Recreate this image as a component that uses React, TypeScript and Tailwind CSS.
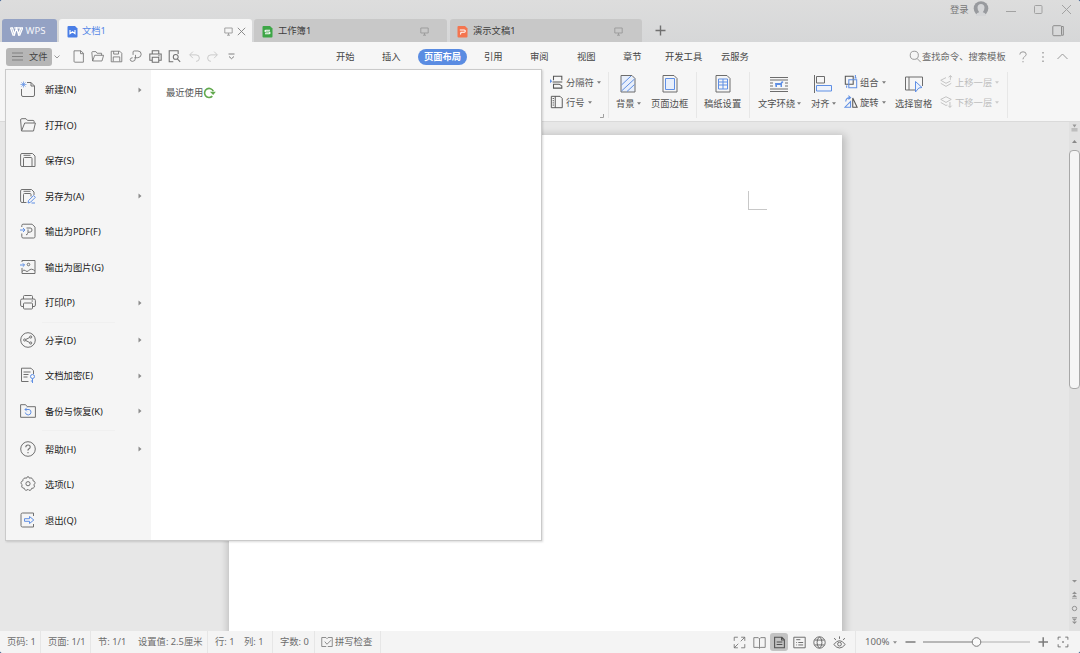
import type { ReactNode } from 'react';
import clsx from 'clsx';

function Svg({ size = 16, className, children }: { size?: number; className?: string; children: ReactNode }) {
  return (
    <svg
      width={size}
      height={size}
      viewBox="0 0 16 16"
      fill="none"
      stroke="currentColor"
      strokeWidth="1"
      className={clsx('shrink-0', className)}
    >
      {children}
    </svg>
  );
}

const BLUE = '#5f8fe4';

/* ---------- file menu icons ---------- */

const menuIcons: Record<string, ReactNode> = {
  new: (
    <>
      <path d="M1.500 8v6q0 1.500 1.500 1.500h10q1.500 0 1.500-1.500V5l-3.500-3.500H7M11 1.500v3.500h3.500" />
      <path d="M3.500.5v6M.5 3.500h6M1.400 1.400l4.200 4.200M5.600 1.400L1.400 5.600" stroke={BLUE} strokeWidth=".7" />
    </>
  ),
  open: <path d="M1.500 14L.6 3q0-1.300 1.200-1.300h4.200l1.500 1.700h5.600q1 0 1 1v1.400M1.500 14h12l1.900-8H4.700L1.500 14z" />,
  save: (
    <>
      <path d="M2 1.500h10.500l2.500 2.500v10.500H2q-1.400 0-1.400-1.400V2.900Q.6 1.500 2 1.500z" />
      <path d="M3.500 14.500v-8q0-1 1-1h6.500q1 0 1 1v8M3.500 3.300h7" />
    </>
  ),
  saveAs: (
    <>
      <path d="M6.500 14.500H2q-1.400 0-1.400-1.400V2.900Q.6 1.500 2 1.500h9.500l2.500 2.500v3M3.500 14.500v-8q0-1 1-1h5.500q1 0 1 1v2M3.500 3.300h7" />
      <path d="M8 15l.6-2.500 5-5 1.800 1.800-5 5L8 15zM11.500 15h3.500" stroke={BLUE} />
    </>
  ),
  pdf: (
    <>
      <path d="M1.800 4V2.500q0-1.300 1.300-1.300h9l2.900 2.900v9.600q0 1.300-1.300 1.300H3.100q-1.300 0-1.300-1.300V10.500" />
      <path d="M6.500 5h3.700q1.800 0 1.800 2t-1.800 2q-2.700 0-2.700 1.500T6 11.700M8 6.500v3" />
      <path d="M0 7h5M3 5l2 2-2 2" stroke={BLUE} />
    </>
  ),
  image: (
    <>
      <path d="M2 3V1.500h13v13H2V9M2 12.500q2-2.500 3.500-.8t3 0q3-3.200 6.500.4" />
      <circle cx="8.500" cy="5.500" r="1.300" />
      <path d="M0 6h4.500M2.800 4.300L4.500 6 2.800 7.700" stroke={BLUE} />
    </>
  ),
  print: (
    <>
      <path d="M3.500 5V2.500q0-1 1-1h7q1 0 1 1V5M3.500 12.500H2q-1.400 0-1.400-1.400V6.500Q.6 5 2 5h12q1.400 0 1.400 1.500v4.600q0 1.400-1.400 1.400h-1.500" />
      <path d="M4.500 9h7q1 0 1 1v4q0 1-1 1h-7q-1 0-1-1v-4q0-1 1-1zM11.500 7h1.500" />
    </>
  ),
  share: (
    <>
      <circle cx="8" cy="8" r="7.300" />
      <circle cx="4.700" cy="8" r="1.100" />
      <circle cx="10.700" cy="5" r="1.100" />
      <circle cx="10.700" cy="11" r="1.100" />
      <path d="M5.700 7.500l4-2M5.700 8.500l4 2" />
    </>
  ),
  encrypt: (
    <>
      <path d="M8.500 14.500H1.500V1.200H11L13.500 3.700V7M3.500 5h7M3.500 7.500h5M3.500 10h4" />
      <circle cx="12.500" cy="9.500" r="2" stroke={BLUE} />
      <path d="M12.500 11.500V16M12.500 14h-1.700" stroke={BLUE} />
    </>
  ),
  backup: (
    <>
      <path d="M.6 14.300V1.700h5l1.600 2h8.200v10.600z" />
      <path d="M5 6.500h4q2 .3 2 2.700t-2.700 2.800q-2.600-.1-3-2.500M6.800 4.700L5 6.500l1.800 1.800" stroke={BLUE} />
    </>
  ),
  help: (
    <>
      <circle cx="8" cy="8" r="7.300" />
      <path d="M5.800 6.300q0-2.300 2.200-2.300t2.200 2q0 1-1.200 1.800T8 9.700M8 11v1.300" strokeWidth="1.100" />
    </>
  ),
  options: (
    <>
      <path
        d="M6.400 2.300Q6.800.7 8 .7t1.600 1.600q1.400-1 2.500.1t.9 2.400q1.900.3 2 1.700t-1.200 2.400q1.200 1.200.4 2.400t-2.500 1q-.2 1.700-1.600 2T8 13.300q-1 1.300-2.300.9t-1.500-2q-1.700.2-2.300-1.100t.4-2.300Q.8 8 1 6.600t1.900-1.800q-.2-1.500 1-2.400t2.500-.1z"
        strokeLinejoin="round"
      />
      <circle cx="8" cy="7.700" r="2.100" />
    </>
  ),
  exit: (
    <>
      <path d="M13.500 4V1H2.500Q1 1 1 2.500v11Q1 15 2.500 15h11V12" />
      <path d="M4.500 6.700h5V4.500L13.800 8l-4.300 3.500V9.300h-5z" stroke={BLUE} />
    </>
  ),
};

type MenuEntry = { icon: string; label: string; sub?: boolean };

const fileMenu: MenuEntry[][] = [
  [
    { icon: 'new', label: '新建(N)', sub: true },
    { icon: 'open', label: '打开(O)' },
    { icon: 'save', label: '保存(S)' },
    { icon: 'saveAs', label: '另存为(A)', sub: true },
    { icon: 'pdf', label: '输出为PDF(F)' },
    { icon: 'image', label: '输出为图片(G)' },
    { icon: 'print', label: '打印(P)', sub: true },
  ],
  [
    { icon: 'share', label: '分享(D)', sub: true },
    { icon: 'encrypt', label: '文档加密(E)', sub: true },
    { icon: 'backup', label: '备份与恢复(K)', sub: true },
  ],
  [
    { icon: 'help', label: '帮助(H)', sub: true },
    { icon: 'options', label: '选项(L)' },
    { icon: 'exit', label: '退出(Q)' },
  ],
];

function FileMenu() {
  return (
    <div className="absolute top-[69px] left-[5px] z-10 flex h-[472px] w-[537px] border border-[#cacaca] bg-white shadow-[1px_1px_2px_rgba(0,0,0,0.15)]">
      <div className="w-[145px] bg-[#f5f5f5] pt-[2px]">
        {fileMenu.map((group, i) => (
          <div key={i} className={clsx(i > 0 && 'pt-[2.200px]')}>
            {i > 0 && <div className="mx-9 -mt-px h-px bg-[#f0f0f0]" />}
            {group.map((entry) => (
              <div key={entry.icon} className="flex h-[35.500px] items-center pl-[14px] text-[#1c1c1c]">
                <Svg className="-mt-px -ml-[.5px] text-[#707070]">{menuIcons[entry.icon]}</Svg>
                <span className="ml-[9.500px] w-[93px] pt-px">{entry.label}</span>
                {entry.sub && (
                  <svg width="4" height="6" viewBox="0 0 4 6" fill="#8c8c8c">
                    <path d="M.5.5L3.500 3 .5 5.500z" />
                  </svg>
                )}
              </div>
            ))}
          </div>
        ))}
      </div>
      <div className="flex flex-1 items-start pt-[16px] pl-[15px] text-[#555]">
        <span className="leading-[14px]">最近使用</span>
        <Svg size={13} className="text-[#62a94e]">
          <path d="M11.500 12.500A5.600 5.600 0 1 1 12.700 6.500" strokeWidth="2" />
          <path d="M8.500 7h7.300l-3.300 4z" fill="currentColor" stroke="none" />
        </Svg>
      </div>
    </div>
  );
}

/* ---------- title bar ---------- */

function Monitor() {
  return (
    <svg width="9" height="9" viewBox="0 0 9 9" fill="none" stroke="#999" strokeWidth=".9" className="mt-px ml-[.5px]">
      <path d="M.8 1h7.400v5H.8zM4.500 6v2M3 8.200h3" />
    </svg>
  );
}

function DocBadge({ kind }: { kind: 'writer' | 'sheet' | 'slides' }) {
  const fill = { writer: '#4a7ee6', sheet: '#3da646', slides: '#f4754f' }[kind];
  return (
    <svg width="11" height="12" viewBox="0 0 11 12" fill="none" stroke="#fff" strokeWidth="1.100" className="mt-px shrink-0">
      <path d="M1.500 0H8l2.500 2.500v8q0 1-1 1h-8q-1 0-1-1V1q0-1 1-1z" fill={fill} stroke="none" />
      {kind === 'writer' && <path d="M3 4v3.700l2.500-2 2.500 2V4" />}
      {kind === 'sheet' && <path d="M8 4.200H4q-1 0-1 .9t1 .9h3q1 0 1 .9t-1 .9H3M4.500 6h2" />}
      {kind === 'slides' && <path d="M2.800 4h4.500q1 0 1 1t-1 1.200H4L3.500 8.500" />}
    </svg>
  );
}

function TitleBar() {
  return (
    <header className="h-[42px] bg-linear-to-b from-[#dddddd] to-[#d6d7d8]">
      <div className="flex h-[19px] items-center justify-end pr-[8px] text-[#777]">
        <span className="w-[23px]">登录</span>
        <svg width="16" height="15" viewBox="0 0 16 15" className="mr-[17px] -mt-[3px]">
          <circle cx="8" cy="7.500" r="7.300" fill="#989a9e" />
          <path d="M3 15q0-3 3.200-3.800Q4.500 9.500 4.500 6.500 4.700 3 8 3t3.500 3.500q0 3-1.700 4.700Q13 12 13 15z" fill="#d4d5d7" />
        </svg>
        <svg width="66" height="12" viewBox="0 0 66 12" fill="none" stroke="#a2a2a2" strokeWidth="1" className="-mt-px">
          <path d="M0 8.500h10M56 2l9 9M65 2l-9 9" />
          <rect x="28.500" y="2.500" width="7.500" height="8" rx="1" />
        </svg>
      </div>
      <div className="flex h-[23px] pl-[2px] text-[#3d3d3d]">
        <div className="mr-[2px] flex w-[55px] items-center rounded-t-[3px] bg-[#94a2c4] pt-px pl-[8px] text-[#f4f6fa]">
          <svg width="13" height="9" viewBox="0 0 13 9" fill="none" stroke="#fff" strokeWidth="1.300">
            <path d="M.3.8h2.200l2 6.700 2-6.700 2 6.700 2.300-6.700H4.200M.5.8l2.500 7.400h1.500M10.800.8h2L9.800 8.200H8.500" />
          </svg>
          <span className="ml-[2.500px] text-[9.600px]">WPS</span>
        </div>
        <div className="mr-[2px] flex w-[193px] items-center rounded-t-[3px] bg-[#f6f6f6] pt-px pl-[8px] text-[#5587e6]">
          <DocBadge kind="writer" />
          <span className="ml-[4px] w-[141px]">文档1</span>
          <Monitor />
          <svg width="9" height="9" viewBox="0 0 9 9" stroke="#808080" strokeWidth=".9" className="mt-px ml-[4.500px]">
            <path d="M.8.8l7.400 7.400M8.200.8L.8 8.200" />
          </svg>
        </div>
        <div className="mr-[3px] flex w-[193px] items-center rounded-t-[3px] bg-[#c8c8c8] pt-px pl-[8px]">
          <DocBadge kind="sheet" />
          <span className="ml-[5px] w-[141px]">工作簿1</span>
          <Monitor />
        </div>
        <div className="flex w-[192px] items-center rounded-t-[3px] bg-[#c8c8c8] pt-px pl-[7px]">
          <DocBadge kind="slides" />
          <span className="ml-[5px] w-[140px]">演示文稿1</span>
          <Monitor />
        </div>
        <svg width="11" height="11" viewBox="0 0 11 11" stroke="#707070" strokeWidth="1.400" className="mt-[6px] ml-[13px]">
          <path d="M5.500.5v10M.5 5.500h10" />
        </svg>
        <svg width="13" height="12" viewBox="0 0 13 12" fill="none" stroke="#8c8c8c" className="mt-[6px] mr-[15px] ml-auto">
          <rect x=".8" y=".7" width="8.700" height="10" rx="1" />
          <path d="M9.500 1.500h1.800v8.700H9.500" />
        </svg>
      </div>
    </header>
  );
}

/* ---------- menu row ---------- */

const quickIcons: { id: string; w: string; body: ReactNode; dim?: boolean }[] = [
  { id: 'new', w: 'w-[19px]', body: <path d="M2.500 1h8.500l3 3v11h-10.500q-1 0-1-1zM10.500 1v3.500H14" /> },
  { id: 'open', w: 'w-[19px]', body: <path d="M2 13.500L1 3q0-1 1-1h4l1.500 2H13v2.500M2 13.500h11.500l2-7H4.500z" /> },
  { id: 'save', w: 'w-[19px]', body: <path d="M1.500 1.500h10.500l2.500 2.500v10.500h-13zM4.500 1.500V5h6V1.500M4 14V8.500h8V14" /> },
  { id: 'pdf', w: 'w-[20px]', body: <path d="M5 6V2.500Q5 1.200 6.500 1.200h4.500q4 .3 4 4t-4 4.300H6.500M8 6v3.500q0 4.500-3.500 4.500-3 0-3-2.200T4.500 9.500" /> },
  { id: 'print', w: 'w-[19px]', body: <path d="M4 5V1h8v4M4 12.500H1V5h14v7.500h-3M4 9h8v6H4zM11.500 7h1.500" strokeWidth="1.300" /> },
  { id: 'preview', w: 'w-[20px]', body: <path d="M6.500 14.500H1.500V1h11v4M12.500 8.500a3 3 0 1 1-6 0a3 3 0 1 1 6 0M11.500 11l3.500 3.500" strokeWidth="1.300" /> },
  { id: 'undo', w: 'w-[18px]', dim: true, body: <path d="M6 2L2 6l4 4M2.500 6H10q4 0 4 4t-4 4" /> },
  { id: 'redo', w: 'w-[20px]', dim: true, body: <path d="M10 2l4 4-4 4M13.500 6H6q-4 0-4 4t4 4" /> },
];

const ribbonTabs = [
  { label: '插入', w: 'w-[36px]' },
  { label: '页面布局', w: 'w-[49px]' },
  { label: '引用', w: 'w-[46px]' },
  { label: '审阅', w: 'w-[47px]' },
  { label: '视图', w: 'w-[46px]' },
  { label: '章节', w: 'w-[42px]' },
  { label: '开发工具', w: 'w-[56px]' },
  { label: '云服务', w: 'w-[30px]' },
];

function MenuRow() {
  return (
    <div className="flex h-[28px] items-center pt-px pl-[6px] text-[#444]">
      <div className="flex h-[18px] w-[46px] items-center rounded-[3px] bg-[#b6b6b6] pl-[6px]">
        <svg width="11" height="9" viewBox="0 0 11 9" stroke="#808080">
          <path d="M0 1h11M0 4.500h11M0 8h11" />
        </svg>
        <span className="ml-[6px]">文件</span>
      </div>
      <svg width="6" height="4" viewBox="0 0 6 4" fill="none" stroke="#999" className="mr-[11.500px] ml-[2px]">
        <path d="M.5.5L3 3 5.500.5" />
      </svg>
      {quickIcons.map((q) => (
        <div key={q.id} className={clsx('flex', q.w, q.dim ? 'text-[#c0c0c0]' : 'text-[#707070]')}>
          <Svg size={13}>{q.body}</Svg>
        </div>
      ))}
      <svg width="7" height="7" viewBox="0 0 7 7" fill="none" stroke="#808080" className="ml-[2.500px]">
        <path d="M.5 1h6M1 3.500l2.500 2.200L6 3.500" />
      </svg>
      <span className="ml-[101px] w-[46px]">开始</span>
      {ribbonTabs.map((t) =>
        t.label === '页面布局' ? (
          <span key={t.label} className="mr-[17px] flex h-[16px] w-[49px] items-center justify-center rounded-full bg-[#5a8ce2] font-bold text-white">
            {t.label}
          </span>
        ) : (
          <span key={t.label} className={clsx('whitespace-nowrap', t.w)}>
            {t.label}
          </span>
        ),
      )}
      <div className="ml-auto flex items-center pr-[12px] text-[#666]">
        <Svg size={13} className="text-[#858585]">
          <circle cx="6.500" cy="6.500" r="5" />
          <path d="M10 10.500l4.500 4.500" />
        </Svg>
        <span className="w-[97px] whitespace-nowrap">查找命令、搜索模板</span>
        <svg width="8" height="12" viewBox="0 0 8 12" fill="none" stroke="#999" className="mr-[15px]">
          <path d="M.8 3.500Q.8.800 4 .8t3.200 2.500q0 1.300-1.600 2.300T4 8.300M4 10v1.300" />
        </svg>
        <svg width="2" height="10" viewBox="0 0 2 10" fill="#999" className="mr-[13px]">
          <path d="M.3 0h1.400v1.400H.3zM.3 4.300h1.400v1.400H.3zM.3 8.600h1.400V10H.3z" />
        </svg>
        <svg width="11" height="7" viewBox="0 0 11 7" fill="none" stroke="#999">
          <path d="M.5 6l5-5 5 5" />
        </svg>
      </div>
    </div>
  );
}

/* ---------- ribbon ---------- */

function Caret({ className }: { className?: string }) {
  return (
    <svg width="4" height="3" viewBox="0 0 4 3" fill="currentColor" className={clsx('shrink-0 opacity-75', className)}>
      <path d="M0 .3h4L2 2.700z" />
    </svg>
  );
}

function SmallButton({ label, icon, dim }: { label: string; icon: ReactNode; dim?: boolean }) {
  return (
    <div className={clsx('flex h-[20px] items-center whitespace-nowrap', dim ? 'text-[#bdbdbd]' : 'text-[#555]')}>
      <Svg size={14}>{icon}</Svg>
      <span className="ml-[2px] pt-px">{label}</span>
      <Caret className="ml-[3px]" />
    </div>
  );
}

function BigButton({ label, icon, caret, w }: { label: string; icon: ReactNode; caret?: boolean; w: string }) {
  return (
    <div className={clsx('flex flex-col text-[#505050]', w)}>
      <div className={clsx('flex h-[24px] items-center', caret ? 'justify-start' : 'justify-center', caret && (label.length === 2 ? 'pl-[2px]' : 'pl-[11px]'))}>
        <svg width="20" height="20" viewBox="0 0 20 20" fill="none" stroke="#6c6c6c">
          {icon}
        </svg>
      </div>
      <div className="-mt-px flex h-[17px] items-center whitespace-nowrap">
        {label}
        {caret && <Caret className="ml-[2px]" />}
      </div>
    </div>
  );
}

function Divider({ className }: { className?: string }) {
  return <div className={clsx('h-[46px] w-px shrink-0 bg-[#e7e7e7]', className)} />;
}

function Ribbon() {
  return (
    <div className="flex h-[52px] items-start border-b border-[#dadada] pt-[2px] pl-[550px]">
      <div className="relative w-[58px]">
        <SmallButton
          label="分隔符"
          icon={
            <>
              <path d="M4 6V1.500h9.500V6M4 15v-4.500h6.500l3 2v2.500zM3 8h11" strokeWidth="1.200" />
              <path d="M0 4.500L2.500 7 0 9.500z" fill={BLUE} stroke="none" />
            </>
          }
        />
        <SmallButton label="行号" icon={<path d="M1.500 1.500h10l2.500 2.500v10.500H1.500zM6 1.500v13M3 4h1.500M3 6.500h1.500M3 9h1.500M3 11.500h1.500" strokeWidth="1.100" />} />
        <svg width="4" height="4" viewBox="0 0 4 4" fill="none" stroke="#a0a0a0" className="absolute top-[42px] left-[50px]">
          <path d="M0 3.500h3.500V0" />
        </svg>
      </div>
      <Divider />
      <BigButton
        w="ml-[7px] w-[26px]"
        caret
        label="背景"
        icon={
          <>
            <path d="M3 1.500h11l3 3v13.500H3z" fill="#e8effb" />
            <path d="M3.500 11L13 2M3.500 17L16.500 5M9 17.500l7.500-7" stroke={BLUE} />
          </>
        }
      />
      <BigButton
        w="ml-[9px] w-[37px]"
        label="页面边框"
        icon={
          <>
            <path d="M3 1.500h11l3 3v13.500H3z" />
            <path d="M5.500 4.500h9v11h-9z" fill="#e8effb" stroke={BLUE} />
          </>
        }
      />
      <Divider className="ml-[8px]" />
      <BigButton
        w="ml-[7px] w-[37px]"
        label="稿纸设置"
        icon={
          <>
            <path d="M3 1.500h11l3 3v13.500H3z" />
            <path d="M5.500 5h9v3h-9zM5.500 8v3h9V8M5.500 11v4h9v-4M10 5v10" stroke={BLUE} />
          </>
        }
      />
      <Divider className="ml-[8px]" />
      <BigButton
        w="ml-[8px] w-[43px]"
        caret
        label="文字环绕"
        icon={
          <>
            <path d="M1 3.500h18M1 6h18M1 9h3M1 12h3M16 9h3M16 12h3M1 15h18M1 17.500h18" />
            <path d="M6 9h5.500l1.500-2 1.500 1-1.500 1.500v3.500h-1.500v-2H8v2H6.500z" fill={BLUE} stroke="none" />
          </>
        }
      />
      <BigButton
        w="ml-[10px] w-[25px]"
        caret
        label="对齐"
        icon={
          <>
            <path d="M1.500 1v18M3.500 2.500h8v6.500h-8z" />
            <path d="M3.500 11.500h15v5.500h-15z" stroke={BLUE} fill="#eef3fc" />
          </>
        }
      />
      <div className="ml-[8px] w-[51px]">
        <SmallButton
          label="组合"
          icon={
            <>
              <path d="M1.500 1.500h9v9h-9z" strokeWidth="1.200" />
              <path d="M5.500 5.500h9v9h-9zM3 12v2.500M12 3.500h2.500M13 0v3" stroke={BLUE} strokeWidth="1.200" />
            </>
          }
        />
        <SmallButton
          label="旋转"
          icon={
            <>
              <path d="M10 3.500v10.500h5z" strokeWidth="1.200" />
              <path d="M7.500 7.500v6.500H1zM2 7.500q0-4.500 5-4.500M5 .8L7.500 3 5 5" stroke={BLUE} strokeWidth="1.200" />
            </>
          }
        />
      </div>
      <BigButton
        w="w-[37px]"
        label="选择窗格"
        icon={
          <>
            <path d="M11 16H1.500V3h17v9M5 3v13" />
            <path d="M11.500 7.500l6.500 6-3.200.5-3.300 4z" stroke={BLUE} fill="#eaf1fd" />
          </>
        }
      />
      <div className="ml-[7px] w-[68px]">
        <SmallButton dim label="上移一层" icon={<path d="M8 3L2 6l6 3.500L13 7M2 9.500L8 13l6-3.500M13 5.500V.8M11 2.500L13 .8l2 1.700" />} />
        <SmallButton dim label="下移一层" icon={<path d="M8 2L2 5l6 3.500L14 5zM2 8.500L8 12l1.500-.7M12.500 8v6M10.500 12.200l2 2 2-2" />} />
      </div>
      <Divider />
    </div>
  );
}

/* ---------- workspace ---------- */

function ScrollBar() {
  return (
    <div className="ml-auto flex w-[11px] flex-col items-center bg-[#e1e1e1]">
      <svg width="7" height="8" viewBox="0 0 7 8" fill="#999" className="mt-[2px]">
        <path d="M1.500.5h4l-2 3zM.5 4.500h6v1h-6zM.5 6.500h6v.8h-6z" />
      </svg>
      <svg width="5" height="3" viewBox="0 0 5 3" fill="#888" className="mt-[8px]">
        <path d="M2.500 0L5 3H0z" />
      </svg>
      <div className="mt-[7px] h-[239px] w-[11px] shrink-0 rounded-[4px] border border-[#a8a8a8] bg-[#f5f5f5]" />
      <svg width="7" height="48" viewBox="0 0 7 48" fill="#929292" className="mt-auto mb-[4px]">
        <path d="M1 1h5L3.500 3.500zM3.500 12.500l2.500 2.500H1zM3.500 15.500L6 18H1zM1 39.500h5l-2.500 2.500zM1 42.500h5L3.500 45zM1 38h5v.7H1zM1 18.800h5v.7H1z" />
        <circle cx="3.500" cy="29.500" r="2.200" fill="none" stroke="#929292" />
      </svg>
    </div>
  );
}

function Workspace() {
  return (
    <main className="flex h-[509px] overflow-hidden bg-[#e7e7e7]">
      <div className="mt-[13px] ml-[229px] h-[530px] w-[612.500px] bg-white pt-[56px] pl-[519px] shadow-[1px_2px_8px_2px_rgba(0,0,0,0.2)]">
        <div className="h-[19px] w-[19px] border-b border-l border-[#c8c8c8]" />
      </div>
      <ScrollBar />
    </main>
  );
}

/* ---------- status bar ---------- */

const viewIcons: { id: string; body: ReactNode; active?: boolean }[] = [
  { id: 'full', body: <path d="M1.500 6V1.500H6M10 1.500h4.500V6M1.500 10v4.500H6M14.500 10v4.500H10M9.500 6.500l5-5M6.500 9.500l-5 5" /> },
  { id: 'read', body: <path d="M1 2h5.500L8 3.500 9.500 2H15v12H9.500L8 15l-1.500-1H1zM8 3.500V15" /> },
  { id: 'print', active: true, body: <path d="M2 1.500h9L14 4.500v10H2zM10.500 1.500V5H14M4.500 7.500h7M4.500 10.500h7" strokeWidth="1.300" /> },
  { id: 'outline', body: <path d="M1 1.500h14v13H1zM4 4.500h5M6.500 8h6M6.500 11h6M4 8h1M4 11h1" strokeWidth="1.200" /> },
  { id: 'web', body: <path d="M15 8a7 7 0 1 1-14 0a7 7 0 1 1 14 0M11 8q0 5-3 7Q5 13 5 8t3-7q3 2 3 7M2 5h12M2 11h12" strokeWidth="1.200" /> },
  {
    id: 'eye',
    body: (
      <>
        <path d="M1 10.500q7-9.500 14 0-7 8.500-14 0zM8 3.500V.5M3.500 5L1.500 2.500M12.500 5l2-2.500" strokeWidth="1.200" />
        <circle cx="8" cy="10" r="2.300" strokeWidth="1.200" />
      </>
    ),
  },
];

function StatusCell({ w, divider, children }: { w: string; divider?: boolean; children: ReactNode }) {
  return (
    <div className={clsx('flex h-full items-center whitespace-nowrap', w, divider && 'border-r border-[#e6e6e6]')}>
      {children}
    </div>
  );
}

function StatusBar() {
  return (
    <footer className="flex h-[22px] items-center bg-[#f4f4f4] pl-[7px] text-[#6c6c6c]">
      <StatusCell w="w-[34px]" divider>页码: 1</StatusCell>
      <StatusCell w="w-[50px] pl-[7px]" divider>页面: 1/1</StatusCell>
      <StatusCell w="w-[47px] pl-[7px]">节: 1/1</StatusCell>
      <StatusCell w="w-[70px]" divider>设置值: 2.5厘米</StatusCell>
      <StatusCell w="w-[36px] pl-[7px]">行: 1</StatusCell>
      <StatusCell w="w-[29px]" divider>列: 1</StatusCell>
      <StatusCell w="w-[42px] pl-[7px]" divider>字数: 0</StatusCell>
      <StatusCell w="w-[66px] pl-[6px]" divider>
        <Svg size={12} className="mr-[2px]">
          <path d="M7 14H1V2h5.500L8 3.500 9.500 2H15v12H9M5 7.500L8 11l5.500-5.500" />
        </Svg>
        拼写检查
      </StatusCell>
      <div className="ml-auto flex h-full items-center">
        {viewIcons.map((v) => (
          <div key={v.id} className={clsx('mr-[2px] flex size-[18px] items-center justify-center rounded-[3px]', v.active && 'bg-[#c3c3c3] text-[#505050]')}>
            <Svg size={13}>{v.body}</Svg>
          </div>
        ))}
      </div>
      <div className="ml-[5px] h-full w-px bg-[#e6e6e6]" />
      <span className="ml-[9px] w-[27px] text-[9.600px]">100%</span>
      <Caret className="ml-px" />
      <svg width="144" height="12" viewBox="0 0 144 12" fill="none" stroke="#7c7c7c" className="ml-[8px]">
        <path d="M.5 6h10M133.500 6h9.500M138.200 1.300v9.400" strokeWidth="1.500" />
        <path d="M18 6h50" stroke="#7a7a7a" />
        <path d="M76 6h49" stroke="#b0b0b0" />
        <circle cx="71.500" cy="6" r="4.300" fill="#fafafa" />
      </svg>
      <Svg size={12} className="mr-[11px] ml-[8px]">
        <path d="M1.500 5V1.500H5M11 1.500h3.500V5M1.500 11v3.500H5M14.500 11v3.500H11M7 8h2M8 7v2" strokeWidth="1.200" />
      </Svg>
    </footer>
  );
}

export default function App() {
  return (
    <div className="h-[653px] w-[1080px] bg-[#35598c]">
      <div className="relative h-full overflow-hidden rounded-[3px] bg-[#f6f6f6] font-['Noto_Sans','Noto_Sans_CJK_SC',sans-serif] text-[9.300px] leading-[14px]">
        <TitleBar />
        <MenuRow />
        <Ribbon />
        <Workspace />
        <StatusBar />
        <FileMenu />
      </div>
    </div>
  );
}
